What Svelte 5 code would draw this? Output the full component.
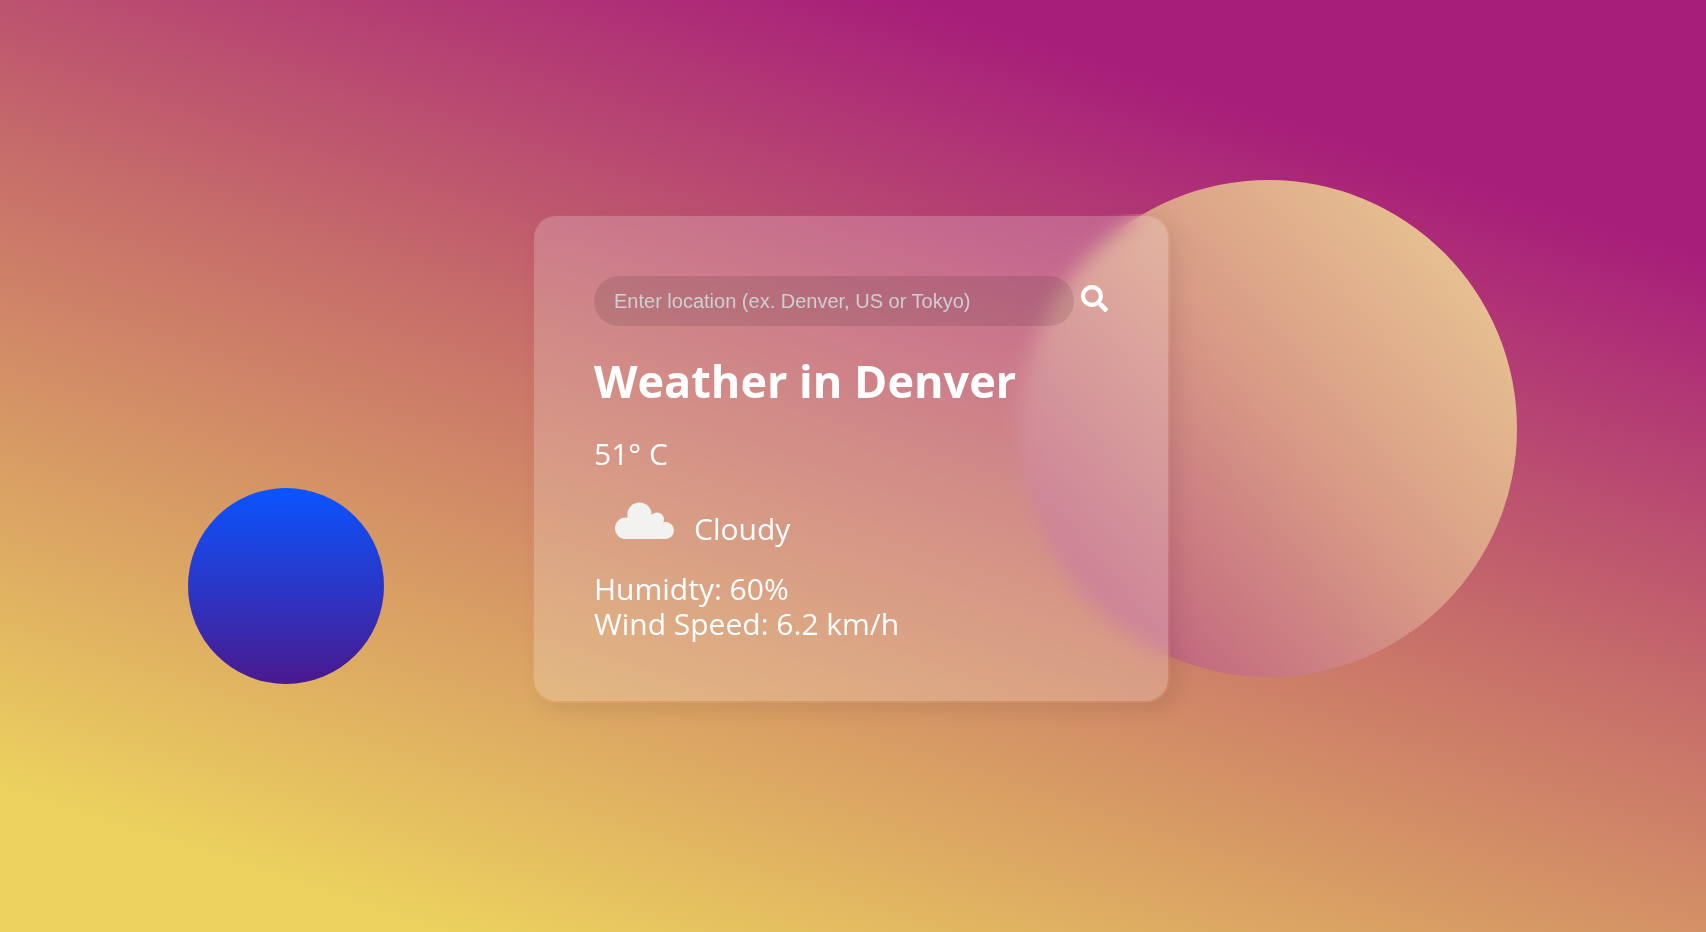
<script>
  let query = $state('');
  const weather = { city: 'Denver', temp: '51° C', sky: 'Cloudy', humidity: '60%', wind: '6.2 km/h' };
</script>

<main class="page">
  <div class="orb small" aria-hidden="true"></div>
  <div class="orb large" aria-hidden="true"></div>

  <section class="card">
    <form class="search" onsubmit={(e) => e.preventDefault()}>
      <input type="text" aria-label="Location" placeholder="Enter location (ex. Denver, US or Tokyo)" bind:value={query} />
      <button type="submit" aria-label="Search">
        <svg viewBox="0 0 512 512" aria-hidden="true">
          <path d="M505 442.7L405.3 343c-4.5-4.5-10.6-7-17-7H372c27.6-35.3 44-79.7 44-128C416 93.1 322.9 0 208 0S0 93.1 0 208s93.1 208 208 208c48.3 0 92.7-16.4 128-44v16.3c0 6.4 2.5 12.5 7 17l99.7 99.7c9.4 9.4 24.6 9.4 33.9 0l28.3-28.3c9.4-9.4 9.4-24.6.1-34zM208 336c-70.7 0-128-57.2-128-128 0-70.7 57.2-128 128-128 70.7 0 128 57.2 128 128 0 70.7-57.2 128-128 128z" />
        </svg>
      </button>
    </form>

    <h1>Weather in {weather.city}</h1>
    <p>{weather.temp}</p>
    <div class="sky">
      <svg viewBox="0 0 100 100" aria-hidden="true">
        <circle cx="31.8" cy="57.3" r="10.8" />
        <circle cx="45.5" cy="43.7" r="12.2" />
        <circle cx="63" cy="48.5" r="7" />
        <circle cx="71.5" cy="59.6" r="8.5" />
        <path d="M31.8 48L57 44l10 7 4.5 8v9.1H31.8z" />
      </svg>
      <p>{weather.sky}</p>
    </div>
    <p>Humidty: {weather.humidity}</p>
    <p>Wind Speed: {weather.wind}</p>
  </section>
</main>

<style>
  :global(body) {
    margin: 0;
  }

  .page {
    position: relative;
    box-sizing: border-box;
    display: flex;
    align-items: center;
    justify-content: center;
    min-height: 100vh;
    padding: 0 4px 16px 0;
    overflow: hidden;
    background: linear-gradient(18deg, #ecd35e 9%, #c66c6a 53%, #a71d7a 83%);
    color: #fff;
    font: 30px/35px 'Open Sans', 'Noto Sans', sans-serif;
  }

  .orb {
    position: absolute;
    border-radius: 50%;
  }

  .small {
    left: 11%;
    top: 488px;
    width: 196px;
    height: 196px;
    background: linear-gradient(180deg, #0b54ff, #4a198f);
  }

  .large {
    right: 189px;
    top: 180px;
    width: 497px;
    height: 497px;
    background: linear-gradient(50deg, #c0637e 14%, #d99c86 54%, #e8c492 90%);
  }

  .card {
    position: relative;
    box-sizing: border-box;
    width: 638px;
    padding: 60px;
    border: 2px solid transparent;
    border-radius: 24px;
    background: rgba(255, 255, 255, 0.2) padding-box;
    box-shadow: 8px 8px 20px rgba(0, 0, 0, 0.08);
    backdrop-filter: blur(10px);
  }

  .search {
    display: flex;
    align-items: center;
    gap: 7px;
  }

  input {
    box-sizing: border-box;
    width: 480px;
    height: 50px;
    padding: 2px 20px 0;
    border: 0;
    border-radius: 25px;
    outline: 0;
    background: rgba(0, 0, 0, 0.1);
    color: #fff;
    font: 20px 'Liberation Sans', Arial, sans-serif;
  }

  input::placeholder {
    color: #cfcfcf;
  }

  button {
    padding: 0 0 4px;
    border: 0;
    background: none;
    cursor: pointer;
  }

  button svg {
    display: block;
    width: 27px;
    height: 27px;
    fill: #fff;
  }

  h1 {
    margin: 30px 0;
    font-size: 45px;
    line-height: 50px;
  }

  p {
    margin: 0;
  }

  .sky {
    display: flex;
    align-items: flex-end;
  }

  .sky svg {
    width: 100px;
    height: 100px;
    fill: #f2f2f0;
  }

  .sky p {
    padding-bottom: 25px;
  }
</style>
